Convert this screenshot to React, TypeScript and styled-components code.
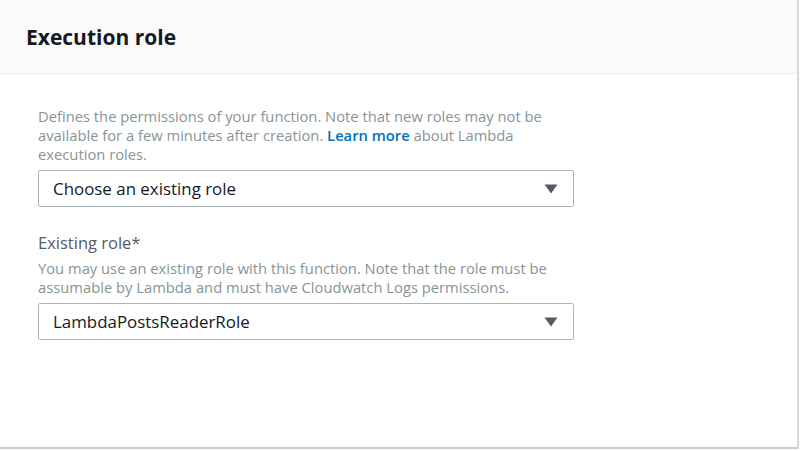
import React from "react";
import styled, { createGlobalStyle } from "styled-components";

const Global = createGlobalStyle`
  html, body { margin: 0; padding: 0; background: #ffffff; }
  body { font-family: "Open Sans", "Liberation Sans", sans-serif; }
`;

const Card = styled.section`
  box-sizing: border-box;
  width: 799px;
  height: 449px;
  background: #ffffff;
  border-right: 2px solid #d5dbdb;
  border-bottom: 2px solid #c4cccc;
  display: flex;
  flex-direction: column;
`;

const Header = styled.header`
  box-sizing: border-box;
  height: 74px;
  background: #fafafa;
  border-bottom: 1px solid #eaeded;
  display: flex;
  align-items: center;
  padding: 0 0 0 26px;
`;

const Title = styled.h2`
  margin: 0;
  font-size: 21px;
  font-weight: 700;
  color: #16191f;
  letter-spacing: 0;
`;

const Body = styled.div`
  padding: 33px 0 0 38px;
  display: flex;
  flex-direction: column;
`;

const Field = styled.div<{ $gap?: number }>`
  display: flex;
  flex-direction: column;
  margin-top: ${(p) => p.$gap ?? 0}px;
`;

const Label = styled.div`
  font-size: 16.5px;
  color: #545b64;
  line-height: 24px;
`;

const Desc = styled.p<{ $top?: number }>`
  margin: ${(p) => p.$top ?? 0}px 0 0 0;
  width: 522px;
  font-size: 14.75px;
  line-height: 19px;
  color: #879596;
`;

const Link = styled.a`
  color: #0073bb;
  text-decoration: none;
  font-weight: 600;
`;

const Select = styled.div`
  box-sizing: border-box;
  margin-top: 6px;
  width: 536px;
  height: 37px;
  border: 1px solid #aab7b8;
  border-radius: 2px;
  display: flex;
  align-items: center;
  justify-content: space-between;
  padding: 0 15px 0 14px;
  font-size: 16.9px;
  color: #16191f;
`;

const Caret = () => (
  <svg width="14" height="10" viewBox="0 0 14 10" aria-hidden="true">
    <path d="M0.5 0.5 H13.5 L7 9.5 Z" fill="#545b64" />
  </svg>
);

export default function App() {
  return (
    <>
      <Global />
      <Card>
        <Header>
          <Title>Execution role</Title>
        </Header>
        <Body>
          <Field>
            <Desc>
              Defines the permissions of your function. Note that new roles may not be
              available for a few minutes after creation. <Link href="#">Learn more</Link>{" "}
              about Lambda execution roles.
            </Desc>
            <Select>
              <span>Choose an existing role</span>
              <Caret />
            </Select>
          </Field>
          <Field $gap={24}>
            <Label>Existing role*</Label>
            <Desc $top={4}>
              You may use an existing role with this function. Note that the role must be
              assumable by Lambda and must have Cloudwatch Logs permissions.
            </Desc>
            <Select>
              <span>LambdaPostsReaderRole</span>
              <Caret />
            </Select>
          </Field>
        </Body>
      </Card>
    </>
  );
}
